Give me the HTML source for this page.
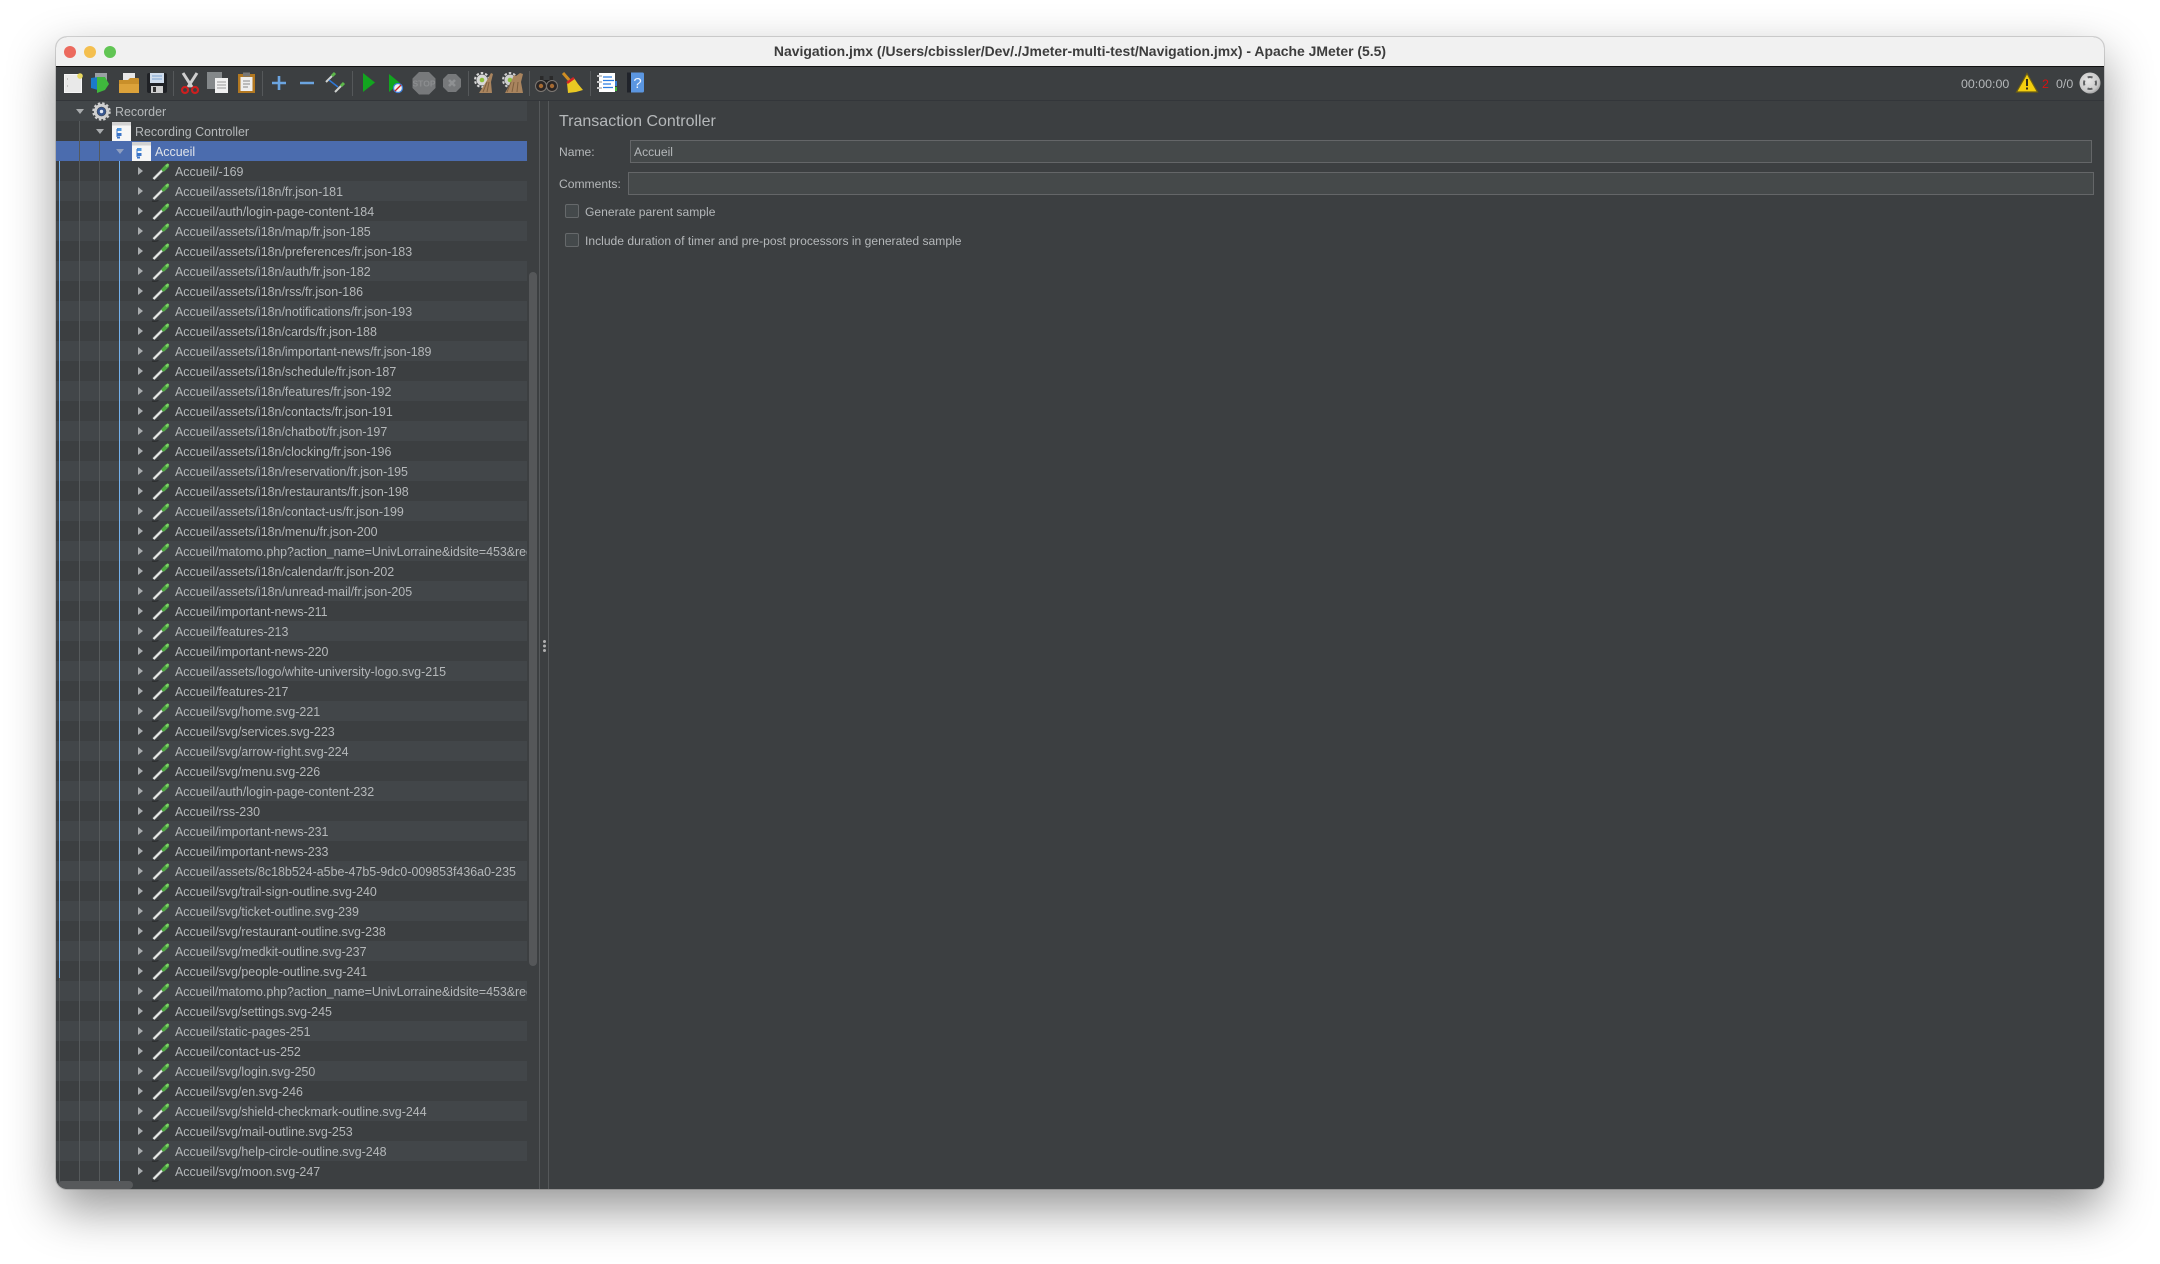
<!DOCTYPE html>
<html lang="fr"><head><meta charset="utf-8"><title>Navigation.jmx - Apache JMeter (5.5)</title>
<style>
html,body{margin:0;padding:0;width:2160px;height:1264px;background:#fff;overflow:hidden}
body{position:relative;font-family:"Liberation Sans",sans-serif}
#win{position:absolute;left:56px;top:37px;width:2048px;height:1152px;border-radius:11px;overflow:hidden;background:#3c3f41;filter:blur(.3px)}
#shadow{position:absolute;left:56px;top:37px;width:2048px;height:1152px;border-radius:11px;box-shadow:0 0 0 1px rgba(0,0,0,.14),0 20px 48px rgba(0,0,0,.42)}
#tb{position:absolute;left:0;top:0;width:100%;height:29px;background:#f1f1f1;border-bottom:1px solid #111;text-align:center;font-size:13.95px;line-height:29px;font-weight:bold;color:#3d3d3d}
.tl{position:absolute;top:8.5px;width:12px;height:12px;border-radius:50%}
#toolbar{position:absolute;left:0;top:30px;width:100%;height:33px;background:#3c3f41;border-bottom:1px solid #33363a}
.abs{position:absolute}
.sep{position:absolute;top:4px;width:1px;height:25px;background:#55585a}
.ic{position:absolute;left:0;top:0}
#tree{position:absolute;left:0;top:64px;width:471px;height:1081px;overflow:hidden;color:#b5b8ba;font-size:12.45px}
.r{position:relative;height:20px;line-height:22px;white-space:nowrap;padding-left:119px}
.r:nth-child(odd){background:#424649}
.r.sel{background:#4b6cae;color:#dfe3ea}
.r.m{letter-spacing:-.04px}
.r svg{position:absolute}
.a{position:absolute;left:82px;top:6px;width:0;height:0;border-top:4.5px solid transparent;border-bottom:4.5px solid transparent;border-left:5.5px solid #a9acae}
.d{position:absolute;top:8px;width:0;height:0;border-left:4px solid transparent;border-right:4px solid transparent;border-top:5px solid #a9acae}
.p{position:absolute;left:95px;top:1px}
.vl{position:absolute;width:1px}
.lb{position:absolute;color:#b5b8ba;font-size:12.1px;line-height:20px;white-space:nowrap}
.in{position:absolute;box-sizing:border-box;background:#45494a;border:1px solid #646668;color:#b5b8ba;font-size:12.1px;line-height:22px;padding-left:3px}
.cb{position:absolute;box-sizing:border-box;width:14px;height:14px;border:1px solid #66696b;border-radius:2px;background:#44494b}
</style></head><body>
<svg width="0" height="0" style="position:absolute"><defs>
<symbol id="pip" viewBox="0 0 20 20"><path d="M1 19c2.500.5 4.500.3 6.500-.5" fill="none" stroke="#2b2d2e" stroke-width="1.200"/><path d="M2.500 17l9-9" stroke="#5a5d5f" stroke-width="3.600" fill="none"/><path d="M2.500 17l9-9" stroke="#e8eae8" stroke-width="2.200" fill="none"/><path d="M12.500 7.500l3.500-3.500" stroke="#4fa842" stroke-width="4" fill="none" stroke-linecap="round"/><path d="M15 4.500l2.500-2.500" stroke="#7fd267" stroke-width="2" fill="none"/></symbol>
<symbol id="doc" viewBox="0 0 19 19"><rect width="19" height="19" fill="#f6f6f6"/><path d="M0 0h19v3.500H0z" fill="#d2d2d2"/><rect x="5" y="6" width="4.500" height="3" fill="#4f97dd"/><rect x="5" y="11" width="4.500" height="3" fill="#3a74c8"/><rect x="5" y="14.500" width="3" height="2" fill="#3a74c8"/><path d="M5 7v8" stroke="#3a74c8" fill="none"/></symbol>
<radialGradient id="gl" cx=".42" cy=".4" r=".7"><stop offset="0" stop-color="#e6e6e6"/><stop offset=".7" stop-color="#c8c8c8"/><stop offset="1" stop-color="#8a8a8a"/></radialGradient>
</defs></svg>
<div id="shadow"></div>
<div id="win">
<div id="tb">Navigation.jmx (/Users/cbissler/Dev/./Jmeter-multi-test/Navigation.jmx) - Apache JMeter (5.5)
<span class="tl" style="left:8px;background:#ec6a5e"></span><span class="tl" style="left:28px;background:#f4bf4f"></span><span class="tl" style="left:48px;background:#61c554"></span></div>
<div id="toolbar">
<svg class="ic" width="2048" height="33" viewBox="56 67 2048 33">
<!-- new -->
<rect x="64.500" y="74.500" width="17" height="18" fill="#e9e9e9" stroke="#f6f6f6"/><circle cx="80" cy="76" r="2.800" fill="#e8d860"/><path d="M67 79h.8M67 86h.8" stroke="#888"/>
<!-- templates -->
<rect x="95" y="73" width="12" height="8" fill="#9aa0a4"/><path d="M91 78l7-1v13l-7-2z" fill="#1b7ac8"/><path d="M97 77h8l4 7-4 6-8 3z" fill="#3fb83d"/>
<!-- open -->
<rect x="123" y="73" width="12" height="8" fill="#e7e7e7"/><path d="M119 80h9l2-2h8a1 1 0 0 1 1 1v14h-20z" fill="#c98f2a"/><path d="M119 84h20v9h-20z" fill="#dca23a"/>
<!-- save -->
<rect x="147" y="73" width="20" height="20" rx="2" fill="#1f2125"/><rect x="150" y="73" width="14" height="10" fill="#cfdcec"/><path d="M152 76h10M152 79h10" stroke="#7ea3cf"/><rect x="151" y="86" width="12" height="7" fill="#cfcfcf"/><rect x="153" y="87" width="3" height="5" fill="#333"/>
<!-- cut -->
<path d="M183 73l9 14M197 73l-9 14" stroke="#cfcfcf" stroke-width="3" fill="none"/><circle cx="185" cy="90" r="3" fill="none" stroke="#cc1f1f" stroke-width="2.200"/><circle cx="195" cy="90" r="3" fill="none" stroke="#cc1f1f" stroke-width="2.200"/>
<!-- copy -->
<rect x="207" y="72" width="15" height="17" fill="#84888a"/><path d="M215 78h13v15h-13z" fill="#f0f0f0"/><path d="M217 82h9M217 85h9M217 88h9" stroke="#999"/>
<!-- paste -->
<rect x="238" y="74" width="17" height="19" fill="#b27821"/><rect x="240.500" y="77" width="12" height="14" fill="#eee"/><rect x="243" y="72.500" width="7" height="4" fill="#777"/><path d="M243 81h7M243 84h7M243 87h5" stroke="#888"/>
<!-- add/remove -->
<path d="M279 76v14M272 83h14" stroke="#6ba4e0" stroke-width="2.600" fill="none"/><path d="M300 83h14" stroke="#6ba4e0" stroke-width="2.600" fill="none"/>
<!-- toggle -->
<path d="M326 82l6-6" stroke="#cfd2d0" stroke-width="2"/><path d="M332 76l3-3" stroke="#5cb84a" stroke-width="3"/><path d="M335 92l6-6" stroke="#cfd2d0" stroke-width="2"/><path d="M341 86l3-3" stroke="#5cb84a" stroke-width="3"/><path d="M329 80l9 7" stroke="#2f78d8" stroke-width="1.500" fill="none"/>
<!-- run -->
<path d="M363 73v19l12-9.500z" fill="#12a51f"/><path d="M389 74v18l11-9z" fill="#12a51f"/><circle cx="398" cy="88" r="4.500" fill="#f2f2f2" stroke="#3f7fd8" stroke-width="1.300"/><path d="M395 91l6-6" stroke="#cc2222" stroke-width="1.300"/>
<!-- stop -->
<path d="M419 72h10l6.500 6.500v9.500l-6.500 6.500h-10l-6.500-6.500v-9.500z" fill="#77797b"/><text x="424" y="86.500" text-anchor="middle" font-family="Liberation Sans,sans-serif" font-size="8.500" font-weight="bold" fill="#8b8d8f">STOP</text>
<path d="M448 74h8l5 5v8l-5 5h-8l-5-5v-8z" fill="#77797b"/><path d="M449 80l6 6M455 80l-6 6" stroke="#8f9193" stroke-width="2.500"/>
<!-- clear -->
<circle cx="482" cy="80" r="5.500" fill="#d8d8d8"/><circle cx="482" cy="80" r="7" fill="none" stroke="#d8d8d8" stroke-width="2" stroke-dasharray="2.500 2"/><circle cx="482" cy="80" r="2.300" fill="#8ebf3c"/><path d="M491 73l2 1-2 8 1 11h-13l7-11z" fill="#a9845e"/><path d="M487 82l-4 10M489 82l-2 10" stroke="#7f6040"/>
<circle cx="510" cy="80" r="5.500" fill="#cfcfcf"/><circle cx="510" cy="80" r="7" fill="none" stroke="#cfcfcf" stroke-width="2" stroke-dasharray="2.500 2"/><circle cx="510" cy="80" r="2.300" fill="#8ebf3c"/><path d="M514 75l2 1 4-3 3 1-2 8 2 11h-18l6-11z" fill="#a9845e"/><path d="M511 82l-4 10M514 82l-2 10M518 82l-1 10" stroke="#7f6040"/>
<!-- search -->
<rect x="540" y="76" width="3.500" height="6" fill="#2a2a2a"/><rect x="549.500" y="76" width="3.500" height="6" fill="#2a2a2a"/><rect x="543" y="80" width="7" height="5" fill="#222"/><circle cx="541" cy="86" r="5.500" fill="#2a2626" stroke="#7d7873"/><circle cx="552" cy="86" r="5.500" fill="#2a2626" stroke="#7d7873"/><circle cx="541" cy="86" r="2.200" fill="#a56a32"/><circle cx="552" cy="86" r="2.200" fill="#a56a32"/>
<!-- broom -->
<path d="M563 73l7 8" stroke="#d08e24" stroke-width="3"/><path d="M567 83l7-5 4 6 5 6-7 2-8 1z" fill="#e9c823"/><path d="M567 83l7-5" stroke="#d42525" stroke-width="2.500"/>
<!-- list -->
<rect x="599" y="73" width="16" height="19" fill="#fff"/><path d="M603 77h9M603 80.500h11M603 84h8M603 87.500h10" stroke="#2e7ee0" stroke-width="1.200"/><path d="M597 76h5M597 82h5M597 88h5" stroke="#c8c8c8" stroke-width="2"/><rect x="615" y="81" width="2" height="5" fill="#3b7ed0"/><rect x="615" y="87" width="2" height="4" fill="#41b33a"/>
<!-- help -->
<rect x="627" y="72.500" width="17" height="20" rx="1.500" fill="#5b96e0"/><rect x="627" y="72.500" width="4" height="20" fill="#20232a"/><text x="637.500" y="88" text-anchor="middle" font-family="Liberation Sans,sans-serif" font-size="15" fill="#eef4fc">?</text>
<!-- warning -->
<path d="M2027 73.500l10.500 18.500h-21z" fill="#f4cf0e" stroke="#6e5f12" stroke-width="1.200"/><path d="M2027 79v7M2027 87.500v2" stroke="#1c1c1c" stroke-width="1.800"/>
<!-- globe -->
<circle cx="2090" cy="83" r="10.500" fill="url(#gl)"/><circle cx="2090" cy="83" r="6" fill="none" stroke="#5f6163" stroke-width="2" stroke-dasharray="5 4.400" stroke-dashoffset="2.500"/>
</svg>
<div class="sep" style="left:117px"></div><div class="sep" style="left:206px"></div><div class="sep" style="left:296px"></div><div class="sep" style="left:412px"></div><div class="sep" style="left:473px"></div><div class="sep" style="left:534px"></div>
<div class="lb" style="left:1905px;top:7px;font-size:12.4px">00:00:00</div>
<div class="lb" style="left:1986px;top:7px;color:#d81010;font-size:12.4px">2</div>
<div class="lb" style="left:2000px;top:7px;font-size:12.4px">0/0</div>
</div>

<div id="tree">
<div class="r" style="padding-left:59px"><i class="d" style="left:20px"></i><svg style="left:36px;top:1px" width="19" height="19" viewBox="0 0 20 20"><circle cx="10" cy="10" r="6.500" fill="none" stroke="#cfcfcf" stroke-width="3"/><circle cx="10" cy="10" r="8.500" fill="none" stroke="#cfcfcf" stroke-width="2.500" stroke-dasharray="2.500 2"/><circle cx="10" cy="10" r="4.500" fill="#37568f"/><circle cx="10" cy="10" r="1.800" fill="#dfe6f2"/></svg>Recorder</div>
<div class="r" style="padding-left:79px"><i class="d" style="left:40px"></i><svg style="left:56px;top:1px" width="19" height="19"><use href="#doc"/></svg>Recording Controller</div>
<div class="r sel" style="padding-left:99px"><i class="d" style="left:60px;border-top-color:#8f9fc0"></i><svg style="left:76px;top:1px" width="19" height="19"><use href="#doc"/></svg>Accueil</div>
<div class="r"><i class="a"></i><svg class="p" width="20" height="20"><use href="#pip"/></svg>Accueil/-169</div>
<div class="r"><i class="a"></i><svg class="p" width="20" height="20"><use href="#pip"/></svg>Accueil/assets/i18n/fr.json-181</div>
<div class="r"><i class="a"></i><svg class="p" width="20" height="20"><use href="#pip"/></svg>Accueil/auth/login-page-content-184</div>
<div class="r"><i class="a"></i><svg class="p" width="20" height="20"><use href="#pip"/></svg>Accueil/assets/i18n/map/fr.json-185</div>
<div class="r"><i class="a"></i><svg class="p" width="20" height="20"><use href="#pip"/></svg>Accueil/assets/i18n/preferences/fr.json-183</div>
<div class="r"><i class="a"></i><svg class="p" width="20" height="20"><use href="#pip"/></svg>Accueil/assets/i18n/auth/fr.json-182</div>
<div class="r"><i class="a"></i><svg class="p" width="20" height="20"><use href="#pip"/></svg>Accueil/assets/i18n/rss/fr.json-186</div>
<div class="r"><i class="a"></i><svg class="p" width="20" height="20"><use href="#pip"/></svg>Accueil/assets/i18n/notifications/fr.json-193</div>
<div class="r"><i class="a"></i><svg class="p" width="20" height="20"><use href="#pip"/></svg>Accueil/assets/i18n/cards/fr.json-188</div>
<div class="r"><i class="a"></i><svg class="p" width="20" height="20"><use href="#pip"/></svg>Accueil/assets/i18n/important-news/fr.json-189</div>
<div class="r"><i class="a"></i><svg class="p" width="20" height="20"><use href="#pip"/></svg>Accueil/assets/i18n/schedule/fr.json-187</div>
<div class="r"><i class="a"></i><svg class="p" width="20" height="20"><use href="#pip"/></svg>Accueil/assets/i18n/features/fr.json-192</div>
<div class="r"><i class="a"></i><svg class="p" width="20" height="20"><use href="#pip"/></svg>Accueil/assets/i18n/contacts/fr.json-191</div>
<div class="r"><i class="a"></i><svg class="p" width="20" height="20"><use href="#pip"/></svg>Accueil/assets/i18n/chatbot/fr.json-197</div>
<div class="r"><i class="a"></i><svg class="p" width="20" height="20"><use href="#pip"/></svg>Accueil/assets/i18n/clocking/fr.json-196</div>
<div class="r"><i class="a"></i><svg class="p" width="20" height="20"><use href="#pip"/></svg>Accueil/assets/i18n/reservation/fr.json-195</div>
<div class="r"><i class="a"></i><svg class="p" width="20" height="20"><use href="#pip"/></svg>Accueil/assets/i18n/restaurants/fr.json-198</div>
<div class="r"><i class="a"></i><svg class="p" width="20" height="20"><use href="#pip"/></svg>Accueil/assets/i18n/contact-us/fr.json-199</div>
<div class="r"><i class="a"></i><svg class="p" width="20" height="20"><use href="#pip"/></svg>Accueil/assets/i18n/menu/fr.json-200</div>
<div class="r m"><i class="a"></i><svg class="p" width="20" height="20"><use href="#pip"/></svg>Accueil/matomo.php?action_name=UnivLorraine&amp;idsite=453&amp;rec</div>
<div class="r"><i class="a"></i><svg class="p" width="20" height="20"><use href="#pip"/></svg>Accueil/assets/i18n/calendar/fr.json-202</div>
<div class="r"><i class="a"></i><svg class="p" width="20" height="20"><use href="#pip"/></svg>Accueil/assets/i18n/unread-mail/fr.json-205</div>
<div class="r"><i class="a"></i><svg class="p" width="20" height="20"><use href="#pip"/></svg>Accueil/important-news-211</div>
<div class="r"><i class="a"></i><svg class="p" width="20" height="20"><use href="#pip"/></svg>Accueil/features-213</div>
<div class="r"><i class="a"></i><svg class="p" width="20" height="20"><use href="#pip"/></svg>Accueil/important-news-220</div>
<div class="r"><i class="a"></i><svg class="p" width="20" height="20"><use href="#pip"/></svg>Accueil/assets/logo/white-university-logo.svg-215</div>
<div class="r"><i class="a"></i><svg class="p" width="20" height="20"><use href="#pip"/></svg>Accueil/features-217</div>
<div class="r"><i class="a"></i><svg class="p" width="20" height="20"><use href="#pip"/></svg>Accueil/svg/home.svg-221</div>
<div class="r"><i class="a"></i><svg class="p" width="20" height="20"><use href="#pip"/></svg>Accueil/svg/services.svg-223</div>
<div class="r"><i class="a"></i><svg class="p" width="20" height="20"><use href="#pip"/></svg>Accueil/svg/arrow-right.svg-224</div>
<div class="r"><i class="a"></i><svg class="p" width="20" height="20"><use href="#pip"/></svg>Accueil/svg/menu.svg-226</div>
<div class="r"><i class="a"></i><svg class="p" width="20" height="20"><use href="#pip"/></svg>Accueil/auth/login-page-content-232</div>
<div class="r"><i class="a"></i><svg class="p" width="20" height="20"><use href="#pip"/></svg>Accueil/rss-230</div>
<div class="r"><i class="a"></i><svg class="p" width="20" height="20"><use href="#pip"/></svg>Accueil/important-news-231</div>
<div class="r"><i class="a"></i><svg class="p" width="20" height="20"><use href="#pip"/></svg>Accueil/important-news-233</div>
<div class="r"><i class="a"></i><svg class="p" width="20" height="20"><use href="#pip"/></svg>Accueil/assets/8c18b524-a5be-47b5-9dc0-009853f436a0-235</div>
<div class="r"><i class="a"></i><svg class="p" width="20" height="20"><use href="#pip"/></svg>Accueil/svg/trail-sign-outline.svg-240</div>
<div class="r"><i class="a"></i><svg class="p" width="20" height="20"><use href="#pip"/></svg>Accueil/svg/ticket-outline.svg-239</div>
<div class="r"><i class="a"></i><svg class="p" width="20" height="20"><use href="#pip"/></svg>Accueil/svg/restaurant-outline.svg-238</div>
<div class="r"><i class="a"></i><svg class="p" width="20" height="20"><use href="#pip"/></svg>Accueil/svg/medkit-outline.svg-237</div>
<div class="r"><i class="a"></i><svg class="p" width="20" height="20"><use href="#pip"/></svg>Accueil/svg/people-outline.svg-241</div>
<div class="r m"><i class="a"></i><svg class="p" width="20" height="20"><use href="#pip"/></svg>Accueil/matomo.php?action_name=UnivLorraine&amp;idsite=453&amp;rec</div>
<div class="r"><i class="a"></i><svg class="p" width="20" height="20"><use href="#pip"/></svg>Accueil/svg/settings.svg-245</div>
<div class="r"><i class="a"></i><svg class="p" width="20" height="20"><use href="#pip"/></svg>Accueil/static-pages-251</div>
<div class="r"><i class="a"></i><svg class="p" width="20" height="20"><use href="#pip"/></svg>Accueil/contact-us-252</div>
<div class="r"><i class="a"></i><svg class="p" width="20" height="20"><use href="#pip"/></svg>Accueil/svg/login.svg-250</div>
<div class="r"><i class="a"></i><svg class="p" width="20" height="20"><use href="#pip"/></svg>Accueil/svg/en.svg-246</div>
<div class="r"><i class="a"></i><svg class="p" width="20" height="20"><use href="#pip"/></svg>Accueil/svg/shield-checkmark-outline.svg-244</div>
<div class="r"><i class="a"></i><svg class="p" width="20" height="20"><use href="#pip"/></svg>Accueil/svg/mail-outline.svg-253</div>
<div class="r"><i class="a"></i><svg class="p" width="20" height="20"><use href="#pip"/></svg>Accueil/svg/help-circle-outline.svg-248</div>
<div class="r"><i class="a"></i><svg class="p" width="20" height="20"><use href="#pip"/></svg>Accueil/svg/moon.svg-247</div>
</div>
<div class="vl" style="left:3px;top:124px;height:817px;background:#74b1ec"></div>
<div class="vl" style="left:3px;top:941px;height:204px;background:#565a5c"></div>
<div class="vl" style="left:23px;top:84px;height:1061px;background:#565a5c"></div>
<div class="vl" style="left:43px;top:104px;height:1041px;background:#565a5c"></div>
<div class="vl" style="left:63px;top:124px;height:1021px;background:#74b1ec"></div>
<div class="abs" style="left:473px;top:235px;width:8px;height:694px;background:#555759;border-radius:4px"></div>
<div class="abs" style="left:2px;top:1144px;width:75px;height:8px;background:#57595b;border-radius:4px"></div>
<div class="vl" style="left:483px;top:64px;height:1088px;background:#55585a"></div>
<div class="vl" style="left:492px;top:64px;height:1088px;background:#55585a"></div>
<div class="abs" style="left:486.500px;top:603px;width:3px;height:3px;background:#b0b0b0;border-radius:50%;box-shadow:0 4.500px 0 #b0b0b0,0 9px 0 #b0b0b0"></div>

<div class="lb" style="left:503px;top:75px;font-size:16px">Transaction Controller</div>
<div class="lb" style="left:503px;top:105px">Name:</div>
<div class="in" style="left:574px;top:103px;width:1462px;height:23px">Accueil</div>
<div class="lb" style="left:503px;top:137px">Comments:</div>
<div class="in" style="left:572px;top:135px;width:1466px;height:23px"></div>
<div class="cb" style="left:509px;top:167px"></div>
<div class="lb" style="left:529px;top:165px">Generate parent sample</div>
<div class="cb" style="left:509px;top:196px"></div>
<div class="lb" style="left:529px;top:194px">Include duration of timer and pre-post processors in generated sample</div>
</div>
</body></html>
